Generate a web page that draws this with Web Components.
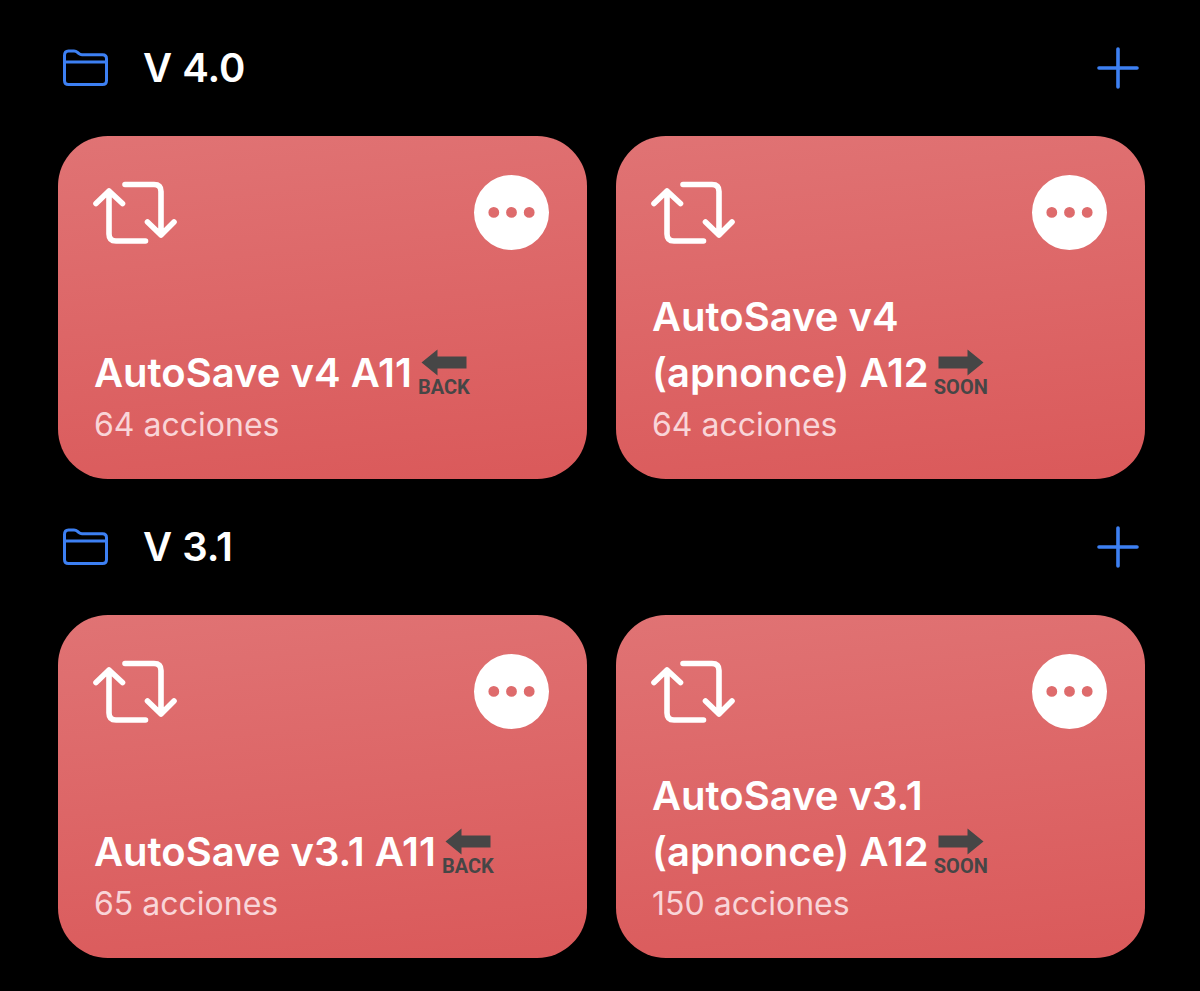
<!DOCTYPE html>
<html lang="es">
<head>
<meta charset="utf-8">
<meta name="viewport" content="width=device-width, initial-scale=1">
<title>Atajos</title>
<style>
    body{
        margin: 0;
        background: #000;
        color: #fff;
        font-family: Inter, "Liberation Sans", sans-serif;
    }
    main{
        padding: 0 55px 32px 58px;
    }
</style>
</head>
<body>
<main>
    <shortcut-folder name="V 4.0">
        <shortcut-card count="64">AutoSave v4 A11<arrow-badge direction="left">BACK</arrow-badge></shortcut-card>
        <shortcut-card count="64">AutoSave v4<br>(apnonce) A12<arrow-badge>SOON</arrow-badge></shortcut-card>
    </shortcut-folder>
    <shortcut-folder name="V 3.1">
        <shortcut-card count="65">AutoSave v3.1 A11<arrow-badge direction="left">BACK</arrow-badge></shortcut-card>
        <shortcut-card count="150">AutoSave v3.1<br>(apnonce) A12<arrow-badge>SOON</arrow-badge></shortcut-card>
    </shortcut-folder>
</main>

<script>
class ShortcutFolder extends HTMLElement{
    constructor(){
        super()
        this.attachShadow({mode: 'open'})
        this.shadowRoot.innerHTML = `
            <style>
                :host{
                    display: block;
                }
                header{
                    display: flex;
                    align-items: center;
                    gap: 35px;
                    min-height: 136px;
                    padding: 0 6px 0 4px;
                    box-sizing: border-box;
                }
                h2{
                    flex: 1;
                    margin: 0;
                    font-size: 40px;
                    line-height: 56px;
                    font-weight: 600;
                }
                button{
                    padding: 0;
                    border: 0;
                    background: none;
                    cursor: pointer;
                }
                svg{
                    display: block;
                    fill: none;
                    stroke: #3d80f3;
                    stroke-width: 3;
                    stroke-linecap: round;
                    stroke-linejoin: round;
                }
                .cards{
                    display: grid;
                    grid-template-columns: 1fr 1fr;
                    gap: 29px;
                }
            </style>
            <header>
                <svg width="46" height="38" viewBox="0 0 46 38" aria-hidden="true">
                    <path d="M2.5 31.5V6.5Q2.5 2 6.5 2H12Q14 2 15.5 3.3L17 4.7Q18.3 5.8 20 5.8H40.5Q44.5 5.8 44.5 9.8V31.5Q44.5 35.5 40.5 35.5H6.5Q2.5 35.5 2.5 31.5ZM2.5 13H44.5"/>
                </svg>
                <h2></h2>
                <button type="button" aria-label="Añadir">
                    <svg width="42" height="42" viewBox="0 0 42 42"><path d="M21 2V40M2 21H40" stroke-width="3.6"/></svg>
                </button>
            </header>
            <div class="cards"><slot></slot></div>
        `
        this._nameEl = this.shadowRoot.querySelector('h2')
    }
    connectedCallback(){
        this._nameEl.textContent = this.getAttribute('name')
    }
}

class ShortcutCard extends HTMLElement{
    constructor(){
        super()
        this.attachShadow({mode: 'open'})
        this.shadowRoot.innerHTML = `
            <style>
                :host{
                    display: flex;
                    flex-direction: column;
                    justify-content: space-between;
                    min-height: 343px;
                    box-sizing: border-box;
                    padding: 39px 38px 30px 36px;
                    border-radius: 50px;
                    background: linear-gradient(174deg, #e07374, #da595a);
                }
                .top{
                    display: flex;
                    justify-content: space-between;
                    align-items: center;
                }
                .repeat{
                    fill: none;
                    stroke: #fff;
                    stroke-width: 5.6;
                    stroke-linecap: round;
                    stroke-linejoin: round;
                    overflow: visible;
                }
                button{
                    padding: 0;
                    border: 0;
                    border-radius: 50%;
                    background: none;
                    cursor: pointer;
                }
                button svg{
                    display: block;
                    fill: #fff;
                }
                h3{
                    margin: 0;
                    font-size: 40px;
                    line-height: 56px;
                    font-weight: 600;
                }
                p{
                    margin: 0;
                    font-size: 32px;
                    line-height: 48px;
                    font-weight: 400;
                    color: #f9d5d8;
                }
            </style>
            <div class="top">
                <svg class="repeat" width="83" height="63" viewBox="0 0 83 63" aria-hidden="true">
                    <path d="M2 22.5L15 10L28.5 22.5M15 10V53Q15 60 22 60H51.5M31 3.5H60Q67 3.5 67 10.5V54M53.5 41L67 54L80 41"/>
                </svg>
                <button type="button" aria-label="Más opciones">
                    <svg width="75" height="75" viewBox="0 0 75 75">
                        <path fill-rule="evenodd" d="M37.5 0a37.5 37.5 0 1 0 0 75a37.5 37.5 0 1 0 0-75ZM19.8 32a5.4 5.4 0 1 0 0 10.8a5.4 5.4 0 1 0 0-10.8ZM37.5 32a5.4 5.4 0 1 0 0 10.8a5.4 5.4 0 1 0 0-10.8ZM55.2 32a5.4 5.4 0 1 0 0 10.8a5.4 5.4 0 1 0 0-10.8Z"/>
                    </svg>
                </button>
            </div>
            <div>
                <h3><slot></slot></h3>
                <p></p>
            </div>
        `
        this._countEl = this.shadowRoot.querySelector('p')
    }
    connectedCallback(){
        this._countEl.textContent = `${this.getAttribute('count')} acciones`
    }
}

// arrow with a small word under it, sits inline at the end of a title
class ArrowBadge extends HTMLElement{
    constructor(){
        super()
        this.attachShadow({mode: 'open'})
        this.shadowRoot.innerHTML = `
            <style>
                :host{
                    display: inline-flex;
                    flex-direction: column;
                    align-items: center;
                    width: 50px;
                    margin-left: 7px;
                    padding-top: 4px;
                    vertical-align: top;
                    color: #464646;
                    font: bold 20px/22px Roboto, "Liberation Sans", sans-serif;
                }
                :host([direction="left"]) svg{
                    transform: scaleX(-1);
                }
                svg{
                    display: block;
                    fill: currentColor;
                }
            </style>
            <svg width="46" height="27" viewBox="0 0 46 27" aria-hidden="true"><path d="M.5 7.5H29.5V.5L45.5 13.5L29.5 26.5V19.5H.5Z"/></svg>
            <span><slot></slot></span>
        `
    }
}

customElements.define('shortcut-folder', ShortcutFolder)
customElements.define('shortcut-card', ShortcutCard)
customElements.define('arrow-badge', ArrowBadge)
</script>
</body>
</html>
